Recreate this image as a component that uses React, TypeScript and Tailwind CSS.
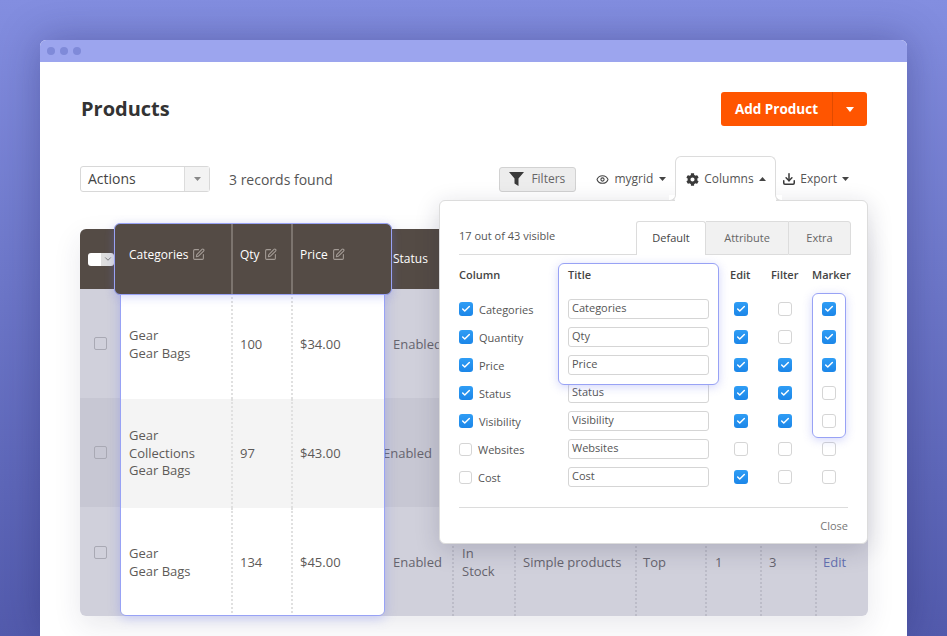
import { Check, ChevronDown, Download, Eye, SquarePen } from "lucide-react";
import { FaCog } from "react-icons/fa";

const gridCols =
  "grid grid-cols-[40px_112px_60px_93px_67px_62px_121px_70px_55px_55px_53px]";

const rows = [
  { cats: "Gear\nGear Bags", qty: "100", price: "$34.00", bg: "bg-[#d0d0db]", hi: "bg-white", shift: "pl-2", box: "", round: "" },
  { cats: "Gear\nCollections\nGear Bags", qty: "97", price: "$43.00", bg: "bg-[#c7c7d3]", hi: "bg-[#f4f4f4]", shift: "-ml-[2px]", box: "", round: "" },
  { cats: "Gear\nGear Bags", qty: "134", price: "$45.00", bg: "bg-[#d0d0db]", hi: "bg-white", shift: "pl-2", box: "-mt-[18px]", round: "rounded-b-md" },
];

const columnRows = [
  { label: "Categories", title: "Categories", show: true, edit: true, filter: false, marker: true },
  { label: "Quantity", title: "Qty", show: true, edit: true, filter: false, marker: true },
  { label: "Price", title: "Price", show: true, edit: true, filter: true, marker: true },
  { label: "Status", title: "Status", show: true, edit: true, filter: true, marker: false },
  { label: "Visibility", title: "Visibility", show: true, edit: true, filter: true, marker: false },
  { label: "Websites", title: "Websites", show: false, edit: false, filter: false, marker: false },
  { label: "Cost", title: "Cost", show: false, edit: true, filter: false, marker: false },
];

function Box({ on, small }: { on: boolean; small?: boolean }) {
  if (on) {
    return (
      <span className="flex size-[14px] shrink-0 items-center justify-center rounded-[3px] bg-gradient-to-b from-[#2f9df5] to-[#1b86e8]">
        <Check className="size-[10px] text-white" strokeWidth={3.5} />
      </span>
    );
  }
  return (
    <span
      className={`block shrink-0 rounded-[3px] border border-[#d5d5d5] bg-white ${
        small ? "size-[13px]" : "size-[14px]"
      }`}
    />
  );
}

function Caret({ up }: { up?: boolean }) {
  return (
    <svg width="7" height="4" viewBox="0 0 7 4" className={`shrink-0 ${up ? "rotate-180" : ""}`}>
      <path d="M0 0h7L3.5 4z" fill="#444" />
    </svg>
  );
}

function HeadCell({ label, className }: { label: string; className: string }) {
  return (
    <div className={`flex items-center gap-[4px] pb-[8px] ${className}`}>
      <span className="text-[12px] font-medium text-white">{label}</span>
      <SquarePen className="mb-[2px] size-[13px] text-[#a39b95]" />
    </div>
  );
}

function ColumnsPopover() {
  return (
    <div className="absolute left-[359px] top-[44px] z-20 w-[429px] rounded-md border border-[#dcdcdc] bg-white pb-[8px] pl-[19px] pr-[19px] pt-[20px] shadow-[0_6px_24px_rgba(30,30,60,0.18)]">
      <div className="absolute left-[118px] top-[62px] z-10 h-[122px] w-[161px] rounded-md border border-[#98a2f5] bg-white shadow-[0_2px_10px_rgba(110,120,240,0.3)]" />
      <div className="absolute left-[372px] top-[92px] z-20 h-[145px] w-[34px] rounded-md border border-[#98a2f5] shadow-[0_2px_10px_rgba(110,120,240,0.3)]" />

      <div className="flex h-[34px] items-stretch">
        <div className="flex flex-1 items-center border-b border-[#dcdcdc] pb-[2px] text-[11px] text-[#555]">
          17 out of 43 visible
        </div>
        <div className="-mr-[3px] flex text-[11px]">
          <div className="flex w-[70px] items-center justify-center rounded-t-[3px] border-l border-r border-t border-[#dcdcdc] font-medium text-[#444]">
            Default
          </div>
          <div className="flex w-[82px] items-center justify-center border-b border-t border-[#dcdcdc] bg-[#f1f1f1] text-[#666]">
            Attribute
          </div>
          <div className="flex w-[63px] items-center justify-center rounded-tr-[3px] border-b border-l border-r border-t border-[#dcdcdc] bg-[#f1f1f1] text-[#666]">
            Extra
          </div>
        </div>
      </div>

      <div className="mt-[10px] grid h-[20px] grid-cols-[109px_162px_41px_41px_36px] items-center text-[11px] font-semibold text-[#444]">
        <span>Column</span>
        <span className="relative z-20">Title</span>
        <span>Edit</span>
        <span>Filter</span>
        <span>Marker</span>
      </div>

      <div className="mt-[10px]">
        {columnRows.map((row, i) => (
          <div
            key={row.label}
            className="grid h-[28px] grid-cols-[109px_162px_41px_41px_36px] items-center text-[11px] text-[#555]"
          >
            <div className="flex items-center gap-[6px]">
              <Box on={row.show} small />
              <span className="pt-[2px]">{row.label}</span>
            </div>
            <div className={i < 3 ? "relative z-20" : ""}>
              <input
                readOnly
                value={row.title}
                className="block h-[20px] w-[141px] rounded-[3px] border border-[#d5d5d5] bg-white pb-[3px] pl-[3px] text-[11px] text-[#555] outline-none"
              />
            </div>
            <div className="pl-[4px]">
              <Box on={row.edit} />
            </div>
            <div className="pl-[7px]">
              <Box on={row.filter} />
            </div>
            <div className="pl-[10px]">
              <Box on={row.marker} />
            </div>
          </div>
        ))}
      </div>

      <div className="mt-[16px] border-t border-[#dcdcdc] pt-[10px] text-right text-[11px] text-[#777]">
        Close
      </div>
    </div>
  );
}

function Toolbar() {
  return (
    <div className="relative mt-[30px] flex h-[44px] items-center pt-[2px] text-[12px] text-[#555]">
      <div className="flex h-[26px] w-[130px] rounded-[3px] border border-[#d8d8d8] bg-white">
        <span className="flex flex-1 items-center pb-[2px] pl-[7px] text-[14px] text-[#444]">Actions</span>
        <span className="flex w-[25px] items-center justify-center border-l border-[#dcdcdc] bg-[#f3f3f3]">
          <svg width="7" height="4" viewBox="0 0 7 4">
            <path d="M0 0h7L3.5 4z" fill="#888" />
          </svg>
        </span>
      </div>
      <span className="ml-[19px] text-[14px] text-[#555]">3 records found</span>

      <div className="ml-auto mr-[20px] flex h-[25px] w-[77px] items-center rounded-[3px] border border-[#d2d2d2] bg-[#ededed]">
        <svg width="15" height="14" viewBox="0 0 15 14" className="ml-[9px]">
          <path d="M0 0h15L9.5 6.5V14L5.5 11.5V6.5z" fill="#3a3a3a" />
        </svg>
        <span className="ml-[7px] text-[#666]">Filters</span>
      </div>
      <div className="mr-[9px] flex items-center">
        <Eye className="size-[13px] text-[#444]" />
        <span className="ml-[5px]">mygrid</span>
        <span className="ml-[6px]">
          <Caret />
        </span>
      </div>
      <div className="relative z-30 -mt-[2px] flex h-[39px] w-[101px] items-center self-start rounded-t-md border-l border-r border-t border-[#dcdcdc] bg-white pl-[10px] pt-[6px]">
        <FaCog className="size-[13px] text-[#3a3a3a]" />
        <span className="ml-[5px]">Columns</span>
        <span className="ml-[5px]">
          <Caret up />
        </span>
        <span className="absolute -left-px -right-px top-full h-[6px] bg-white" />
        <span className="absolute left-[-7px] top-full h-[6px] w-[7px] rounded-br-md border-b border-r border-[#dcdcdc] bg-white" />
        <span className="absolute right-[-7px] top-full h-[6px] w-[7px] rounded-bl-md border-b border-l border-[#dcdcdc] bg-white" />
      </div>
      <div className="ml-[6px] mr-[19px] flex items-center">
        <Download className="size-[14px] text-[#3a3a3a]" strokeWidth={2.6} />
        <span className="ml-[4px]">Export</span>
        <span className="ml-[5px]">
          <Caret />
        </span>
      </div>

      <ColumnsPopover />
    </div>
  );
}

function ProductTable() {
  return (
    <div className="relative mt-[29px] rounded-md text-[13px] leading-[17.5px] text-[#66646e] shadow-[0_10px_28px_rgba(40,40,80,0.1)]">
      <div className={`${gridCols} h-[60px] items-center rounded-t-md bg-[#544b45] text-[12px] font-medium text-white`}>
        <div className="col-span-4 flex items-center pl-[8px]">
          <span className="size-[13px] rounded-l-[3px] bg-white" />
          <span className="flex h-[13px] w-[13px] items-center justify-center rounded-r-[3px] bg-[#dedede]">
            <ChevronDown className="size-[10px] text-[#666]" />
          </span>
        </div>
        <div className="pl-2">Status</div>
      </div>

      {rows.map((row, i) => (
        <div key={i} className={`${gridCols} h-[109px] ${row.bg} ${row.round} items-center`}>
          <div className={`pl-[14px] ${row.box}`}>
            <span className="block size-[13px] rounded-[2px] border border-[#a9a9b4]" />
          </div>
          <div className="col-span-3" />
          <div className={`pt-[2px] ${row.shift}`}>Enabled</div>
          {/* the other cells of rows 1 and 2 sit behind the columns panel */}
          {i === 2 && (
            <>
              <div className="flex h-full items-center whitespace-pre-line border-l-2 border-dotted border-[#bcbcc8] pl-[8px] pt-[2px]">
                {"In\nStock"}
              </div>
              <div className="flex h-full items-center border-l-2 border-dotted border-[#bcbcc8] pl-[7px] pt-[2px]">
                Simple products
              </div>
              <div className="flex h-full items-center border-l-2 border-dotted border-[#bcbcc8] pl-[6px] pt-[2px]">Top</div>
              <div className="flex h-full items-center border-l-2 border-dotted border-[#bcbcc8] pl-[8px] pt-[2px]">1</div>
              <div className="flex h-full items-center border-l-2 border-dotted border-[#bcbcc8] pl-[7px] pt-[2px]">3</div>
              <div className="flex h-full items-center border-l-2 border-dotted border-[#bcbcc8] pl-[6px] pt-[2px] text-[#6470b0]">
                Edit
              </div>
            </>
          )}
        </div>
      ))}

      {/* highlighted columns, lifted above the dimmed table */}
      <div className="absolute left-[40px] top-[60px] z-10 h-[327px] w-[265px] overflow-hidden rounded-b-md border border-[#98a2f5] text-[#5d5a58] shadow-[0_2px_12px_rgba(110,120,240,0.35)]">
        {rows.map((row, i) => (
          <div key={i} className={`grid h-[109px] grid-cols-[110px_60px_93px] ${row.hi}`}>
            <div className="flex items-center whitespace-pre-line pl-[8px]">{row.cats}</div>
            <div className="flex items-center border-l-2 border-dotted border-[#e0e0e0] pl-[7px]">{row.qty}</div>
            <div className="flex items-center border-l-2 border-dotted border-[#e0e0e0] pl-[7px]">{row.price}</div>
          </div>
        ))}
      </div>
      <div className="absolute left-[34px] top-[-6px] z-10 grid h-[72px] w-[278px] grid-cols-[116px_60px_100px] rounded-md border border-[#98a2f5] bg-[#544b45] shadow-[0_2px_10px_rgba(110,120,240,0.3)]">
        <HeadCell label="Categories" className="pl-[14px]" />
        <HeadCell label="Qty" className="border-l-2 border-[#7c746e] pl-[7px]" />
        <HeadCell label="Price" className="border-l-2 border-[#7c746e] pl-[7px]" />
      </div>
    </div>
  );
}

export default function App() {
  return (
    <div className="h-[636px] overflow-hidden bg-gradient-to-b from-[#838ee0] to-[#535bad] px-10 pt-10 font-['Open_Sans',sans-serif]">
      <div className="h-full rounded-t-md bg-white shadow-[0_0_40px_rgba(30,30,90,0.35)]">
        <div className="flex h-[22px] items-center gap-[5px] rounded-t-md bg-[#9ca5ee] pl-[7px]">
          <span className="size-[8px] rounded-full bg-[#7f8ad9]" />
          <span className="size-[8px] rounded-full bg-[#7f8ad9]" />
          <span className="size-[8px] rounded-full bg-[#7f8ad9]" />
        </div>
        <div className="pl-10 pr-[39px] pt-[30px]">
          <div className="flex h-[34px] items-center justify-between">
            <h1 className="pl-px text-[20px] font-bold text-[#333]">Products</h1>
            <div className="mr-px flex h-[34px] rounded-[3px] bg-[#ff5500] text-white">
              <span className="flex w-[112px] items-center justify-center border-r border-[#e04b00] text-[13.5px] font-bold">
                Add Product
              </span>
              <span className="flex w-[34px] items-center justify-center">
                <svg width="8" height="5" viewBox="0 0 8 5">
                  <path d="M0 0h8L4 5z" fill="#fff" />
                </svg>
              </span>
            </div>
          </div>
          <Toolbar />
          <ProductTable />
        </div>
      </div>
    </div>
  );
}
